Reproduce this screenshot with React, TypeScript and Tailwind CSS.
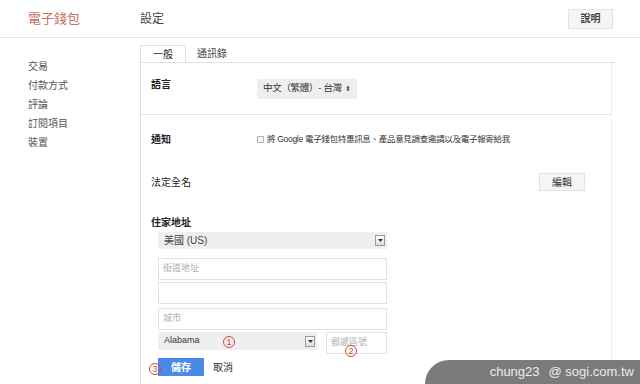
import React from 'react';

const font = { fontFamily: '"Liberation Sans", "Noto Sans CJK TC", sans-serif' };

function Circled({ n, className }: { n: string; className: string }) {
  return (
    <span
      className={`absolute flex h-[12px] w-[12px] items-center justify-center rounded-full border border-[#d2453b] text-[9px] leading-none text-[#d2453b] ${className}`}
    >
      {n}
    </span>
  );
}

function DropBtn() {
  return (
    <span className="flex h-[11px] w-[10px] items-center justify-center border border-[#9a9a9a] bg-gradient-to-b from-white to-[#dcdcdc]">
      <svg width="5" height="3" viewBox="0 0 5 3">
        <path d="M0 0h5L2.5 3z" fill="#333" />
      </svg>
    </span>
  );
}

export default function App() {
  const nav = ['交易', '付款方式', '評論', '訂閱項目', '裝置'];

  return (
    <div className="relative h-[384px] w-[640px] overflow-hidden bg-white text-[11px] text-[#222]" style={font}>
      {/* 頁首 */}
      <div className="flex h-[38px] items-center border-b border-[#e5e5e5]">
        <div className="w-[140px] pl-[28px] text-[13px] text-[#c47264]">電子錢包</div>
        <div className="flex-1 text-[12px] text-[#444]">設定</div>
        <button className="mr-[27px] h-[20px] w-[45px] border border-[#e2e2e2] bg-[#f5f5f5] text-[10px] font-bold text-[#444]">
          說明
        </button>
      </div>

      <div className="flex">
        {/* 側欄 */}
        <div className="flex w-[140px] flex-col gap-[5px] pl-[28px] pt-[22px] text-[10px] text-[#555]">
          {nav.map(item => (
            <div key={item} className="h-[14px] leading-[14px]">{item}</div>
          ))}
        </div>

        {/* 主要內容 */}
        <div className="mt-[7px] h-[400px] w-[475px] border-l border-[#e0e0e0]">
          <div className="flex h-[18px] items-stretch border-b border-[#e0e0e0] text-[10px]">
            <div className="flex w-[45px] items-center justify-center border-t border-r border-[#e0e0e0]">一般</div>
            <div className="flex items-center pl-[11px] text-[#444]">通訊錄</div>
          </div>

          <div className="mr-[3px] border-r border-[#efefef]">
            {/* 語言 */}
            <div className="flex h-[52px] items-center border-b border-[#e5e5e5] pl-[10px]">
              <div className="w-[106px] self-start pt-[14px] text-[10px] font-bold">語言</div>
              <div className="flex h-[20px] items-center gap-[3px] bg-[#eeeeee] px-[6px] text-[9.5px] tracking-[-0.3px] text-[#333]">
                中文（繁體）- 台灣
                <span className="text-[7px] leading-none text-[#555]">⬍</span>
              </div>
            </div>

            {/* 通知 */}
            <div className="flex pl-[10px] pt-[17px]">
              <div className="w-[106px] text-[10px] font-bold">通知</div>
              <div className="flex items-center gap-[3px] text-[8.5px] tracking-[-0.3px] text-[#333]">
                <span className="h-[7px] w-[7px] border border-[#b5b5b5] bg-[#f2f2f2]" />
                將 Google 電子錢包特惠訊息、產品意見調查邀請以及電子報寄給我
              </div>
            </div>

            {/* 法定全名 */}
            <div className="mt-[26px] flex items-center pl-[10px] pr-[26px]">
              <div className="flex-1 text-[10px]">法定全名</div>
              <button className="h-[18px] w-[46px] border border-[#e2e2e2] bg-[#f5f5f5] text-[10px] text-[#333]">編輯</button>
            </div>

            {/* 住家地址 */}
            <div className="pl-[10px] pt-[24px]">
              <div className="text-[10px] font-bold">住家地址</div>
              <div className="relative ml-[7px] mt-[2px] w-[229px]">
                <div className="flex h-[17px] items-center justify-between bg-[#efefef] pl-[6px] pr-[2px] text-[10px] text-[#444]">
                  美國 (US)
                  <DropBtn />
                </div>
                <div className="mt-[9px] flex h-[22px] items-center border border-[#e2e2e2] pl-[4px] text-[9px] text-[#b0b0b0]">街道地址</div>
                <div className="mt-[2px] h-[22px] border border-[#e2e2e2]" />
                <div className="mt-[4px] flex h-[22px] items-center border border-[#e2e2e2] pl-[4px] text-[9px] text-[#b0b0b0]">城市</div>
                <div className="mt-[2px] flex gap-[9px]">
                  <div className="flex h-[18px] w-[159px] items-center justify-between bg-[#efefef] pl-[6px] pr-[2px] text-[9px] text-[#333]">
                    Alabama
                    <DropBtn />
                  </div>
                  <div className="flex h-[22px] flex-1 items-start border border-[#e2e2e2] pl-[4px] pt-[3px] text-[9px] text-[#b0b0b0]">郵遞區號</div>
                </div>
                <Circled n="1" className="left-[65px] top-[104px]" />
                <Circled n="2" className="left-[187px] top-[113px]" />
                <Circled n="3" className="-left-[9px] top-[131px]" />
                <div className="mt-[4px] flex items-center gap-[9px]">
                  <button className="h-[18px] w-[46px] bg-[#4a8ae6] text-[10px] font-bold text-white">儲存</button>
                  <span className="text-[10px] text-[#333]">取消</span>
                </div>
              </div>
            </div>
          </div>
        </div>
      </div>

      {/* 浮水印 */}
      <div className="absolute bottom-0 right-0 flex h-[24px] w-[215px] items-center justify-end rounded-tl-[28px] bg-[#7b7b7b] pr-[6px] text-[13px] text-[#ececec]">
        <span>chung23</span>
        <span className="ml-[9px]">@ sogi.com.tw</span>
      </div>
    </div>
  );
}
